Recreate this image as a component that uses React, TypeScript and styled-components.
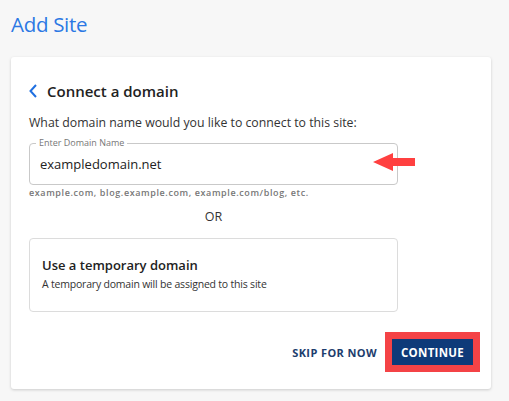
import styled, { createGlobalStyle } from 'styled-components';

const GlobalStyle = createGlobalStyle`
  html, body {
    margin: 0;
    padding: 0;
    background: #f7f7f7;
    font-family: 'Open Sans', 'Liberation Sans', sans-serif;
  }
`;

const Page = styled.div`
  width: 509px;
  height: 401px;
  padding: 9px 0 0 11px;
  box-sizing: border-box;
  overflow: hidden;
`;

const Title = styled.h1`
  margin: 0;
  font-size: 20.5px;
  font-weight: 400;
  color: #2b78e4;
  line-height: 30px;
  letter-spacing: -0.3px;
`;

const Card = styled.div`
  margin-top: 18px;
  width: 480px;
  height: 332px;
  box-sizing: border-box;
  background: #fff;
  border-radius: 3px;
  box-shadow: 0 1px 3px rgba(0, 0, 0, 0.18);
  padding: 23px 11px 0 18px;
  position: relative;
`;

const Heading = styled.div`
  display: flex;
  align-items: center;
  gap: 10px;
  height: 22px;
  font-size: 15px;
  font-weight: 600;
  color: #222;
`;

const Prompt = styled.p`
  margin: 12px 0 0;
  font-size: 12.3px;
  line-height: 17px;
  color: #333;
`;

const Field = styled.fieldset`
  margin: 7px 0 0;
  width: 369px;
  height: 47px;
  box-sizing: border-box;
  border: 1px solid #c9c9c9;
  border-radius: 4px;
  padding: 0 10px;

  legend {
    padding: 0 3px;
    margin-left: -4px;
    font-size: 9px;
    line-height: 10px;
    color: #777;
  }
`;

const Value = styled.div`
  font-size: 13px;
  color: #222;
  line-height: 18px;
  margin-top: 7px;
`;

const Helper = styled.div`
  margin-top: 1px;
  font-size: 9px;
  font-weight: 600;
  letter-spacing: 0.6px;
  color: #777;
  line-height: 13px;
`;

const Or = styled.div`
  width: 369px;
  text-align: center;
  margin-top: 9px;
  font-size: 12.5px;
  color: #333;
  line-height: 17px;
`;

const TempBox = styled.div`
  margin-top: 13px;
  width: 369px;
  height: 74px;
  box-sizing: border-box;
  border: 1px solid #dcdcdc;
  border-radius: 4px;
  padding: 17px 12px 0;

  h3 {
    margin: 0;
    font-size: 13px;
    font-weight: 600;
    color: #222;
    line-height: 18px;
  }

  p {
    margin: 3px 0 0;
    font-size: 10.5px;
    color: #333;
    line-height: 15px;
    letter-spacing: -0.2px;
  }
`;

const Actions = styled.div`
  margin-top: 20px;
  display: flex;
  justify-content: flex-end;
  align-items: center;
  gap: 8px;
`;

const TextButton = styled.button`
  background: none;
  border: none;
  padding: 0;
  font-family: inherit;
  font-size: 11px;
  font-weight: 700;
  letter-spacing: 0.4px;
  color: #1d3d6d;
`;

const Highlight = styled.div`
  border: 7px solid #f44346;
`;

const PrimaryButton = styled.button`
  display: block;
  width: 81px;
  height: 26px;
  border: none;
  background: #0e3a79;
  color: #fff;
  font-family: inherit;
  font-size: 11.5px;
  font-weight: 700;
  letter-spacing: 0.3px;
  padding: 0;
`;

const ArrowMark = styled.svg`
  position: absolute;
  left: 362px;
  top: 96px;
`;

const Chevron = () => (
  <svg width="8" height="14" viewBox="0 0 8 14">
    <path d="M7 1 L1.5 7 L7 13" fill="none" stroke="#1f6fe0" strokeWidth="2" />
  </svg>
);

export default function App() {
  return (
    <Page>
      <GlobalStyle />
      <Title>Add Site</Title>
      <Card>
        <Heading>
          <Chevron />
          Connect a domain
        </Heading>
        <Prompt>What domain name would you like to connect to this site:</Prompt>
        <Field>
          <legend>Enter Domain Name</legend>
          <Value>exampledomain.net</Value>
        </Field>
        <Helper>example.com, blog.example.com, example.com/blog, etc.</Helper>
        <Or>OR</Or>
        <TempBox>
          <h3>Use a temporary domain</h3>
          <p>A temporary domain will be assigned to this site</p>
        </TempBox>
        <Actions>
          <TextButton>SKIP FOR NOW</TextButton>
          <Highlight>
            <PrimaryButton>CONTINUE</PrimaryButton>
          </Highlight>
        </Actions>
        <ArrowMark width="42" height="20" viewBox="0 0 42 20">
          <path d="M0 9 L20 0 L20 5 L42 5 L42 13 L20 13 L20 18 Z" fill="#ff4040" />
        </ArrowMark>
      </Card>
    </Page>
  );
}
